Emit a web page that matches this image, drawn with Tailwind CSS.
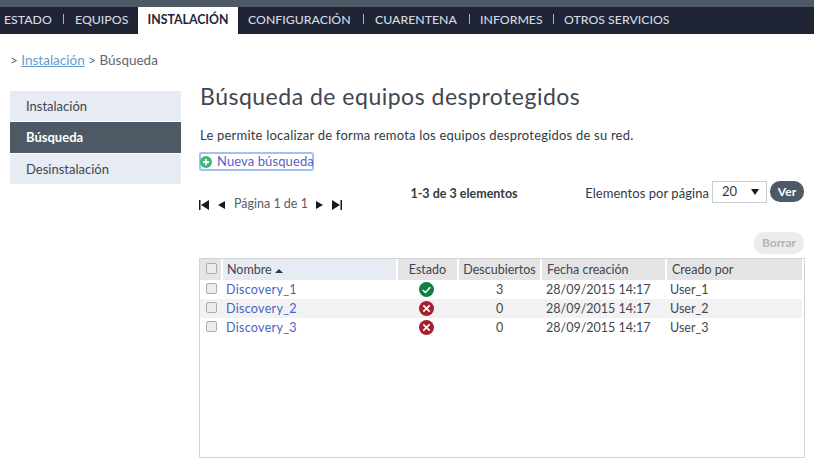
<!DOCTYPE html>
<html lang="es">
<head>
    <meta charset="UTF-8">
    <title>Búsqueda de equipos desprotegidos</title>
    <script src="https://cdn.jsdelivr.net/npm/@tailwindcss/browser@4"></script>
</head>
<body class="bg-white font-['Lato',sans-serif] text-[13px] text-[#3f4650] overflow-hidden">
    <!-- Navbar -->
    <div class="h-[7px] bg-[#4d5a66]"></div>
    <nav class="h-[27px] bg-[#1f2535] flex items-center text-[12.3px] font-medium text-[#d5dae2] whitespace-nowrap">
        <a class="w-[63px] pl-1">ESTADO</a>
        <span class="w-px h-[10px] bg-[#aeb4bd] mb-1"></span>
        <a class="w-[74px] pl-[11px]">EQUIPOS</a>
        <a class="w-[100px] h-full flex items-center justify-center bg-white text-[#1f2535] font-bold">INSTALACIÓN</a>
        <a class="w-[125px] pl-[10px]">CONFIGURACIÓN</a>
        <span class="w-px h-[10px] bg-[#aeb4bd] mb-1"></span>
        <a class="w-[105px] pl-[11px]">CUARENTENA</a>
        <span class="w-px h-[10px] bg-[#aeb4bd] mb-1"></span>
        <a class="w-[83px] pl-[10px]">INFORMES</a>
        <span class="w-px h-[10px] bg-[#aeb4bd] mb-1"></span>
        <a class="pl-[10px]">OTROS SERVICIOS</a>
    </nav>

    <!-- Breadcrumb -->
    <div class="pl-[10px] pt-[16px] h-[57px] text-[13.5px] text-[#5f6670]">&gt; <a class="text-[#5f9ccb] underline">Instalación</a> &gt; Búsqueda</div>

    <div class="flex">
        <!-- Sidebar -->
        <aside class="w-[171px] ml-[10px] mr-[18px] flex flex-col gap-px text-[13px]">
            <div class="h-[30px] pt-px bg-[#e7ebf3] pl-4 flex items-center">Instalación</div>
            <div class="h-[31px] bg-[#4d5a66] pl-4 flex items-center text-white font-bold">Búsqueda</div>
            <div class="h-[30px] pt-px bg-[#e7ebf3] pl-4 flex items-center">Desinstalación</div>
        </aside>

        <!-- Main -->
        <main class="w-[606px]">
            <h1 class="pl-px text-[23px] leading-[30px] -mt-[10px] tracking-[0.5px] text-[#3f4650]">Búsqueda de equipos desprotegidos</h1>
            <p class="pl-px mt-[16px] leading-4 text-[13px] tracking-[0.21px] text-[#333a42]">Le permite localizar de forma remota los equipos desprotegidos de su red.</p>

            <button class="mt-[9px] w-[115px] h-[19px] border-2 border-[#a3c0f5] rounded-[3px] flex items-center justify-start gap-[5px] text-[13px] tracking-[0.1px] text-[#5a5fc4] whitespace-nowrap">
                <svg width="12" height="12" viewBox="0 0 12 12" class="shrink-0 -ml-px"><circle cx="6" cy="6" r="6" fill="#3fb87a"/><path d="M6 3v6M3 6h6" stroke="#fff" stroke-width="1.8"/></svg>
                Nueva búsqueda
            </button>

            <!-- Pager row -->
            <div class="flex h-[47px] mt-[11px]">
                <div class="w-[212px] flex items-center h-[45px] text-[#555c66]">
                    <svg width="10" height="10" viewBox="0 0 10 10"><path d="M0 0h1.5v10H0zM10 0v10L2 5z" fill="#16191f"/></svg>
                    <svg width="8" height="10" viewBox="0 0 8 10" class="ml-[8px]"><path d="M8 1v8L1 5z" fill="#16191f"/></svg>
                    <span class="ml-[9px] text-[12.5px]">Página 1 de 1</span>
                    <svg width="8" height="10" viewBox="0 0 8 10" class="ml-[8px]"><path d="M0 1v8l7-4z" fill="#16191f"/></svg>
                    <svg width="10" height="10" viewBox="0 0 10 10" class="ml-[8px]"><path d="M0 0l8 5-8 5zM8.500 0H10v10H8.500z" fill="#16191f"/></svg>
                </div>
                <div class="w-[177px] pl-px font-bold text-[12.5px] text-[#333a42] pt-[3px]">1-3 de 3 elementos</div>
                <div class="flex-1 flex items-start justify-end pr-px -mt-[1px] text-[#333a42] whitespace-nowrap">
                    <span class="mt-[3px] tracking-[0.05px]">Elementos por página</span>
                    <div class="ml-[3px] w-[55px] h-[22px] border border-[#c9ced5] flex items-center justify-between pl-[9px] pr-[7px]">20<svg width="8" height="6" viewBox="0 0 8 6"><path d="M0 0h8L4 6z" fill="#16191f"/></svg></div>
                    <button class="ml-[3px] w-[34px] h-[21px] bg-[#4d5a66] rounded-[10px] text-white font-bold text-[12px]">Ver</button>
                </div>
            </div>

            <div class="flex justify-end pr-px mt-[3px]">
                <button class="w-[50px] h-[22px] rounded-[10px] bg-[#ececec] text-[#b4b4b4] font-bold text-[12px]">Borrar</button>
            </div>

            <!-- Table -->
            <div class="mt-[4px] h-[200px] border border-[#d2d2d2]">
                <table class="w-[602px] border-collapse table-fixed text-[12.5px] leading-[18px]">
                    <colgroup>
                        <col class="w-[22px]"><col class="w-[175px]"><col class="w-[61px]"><col class="w-[83px]"><col class="w-[125px]"><col class="w-[136px]">
                    </colgroup>
                    <thead>
                        <tr class="h-[21px] text-[#3f4650] font-normal">
                            <th class="bg-[#e4e4e4] border-r-2 border-white font-normal"><span class="block w-[11px] h-[11px] ml-[6px] -mt-[2px] border border-[#ababab] rounded-[2px] bg-[#ececec]"></span></th>
                            <th class="bg-[#e7ebf3] border-r-2 border-white font-normal text-left pl-[4px] pt-px">Nombre <svg width="8" height="4" viewBox="0 0 8 4" class="inline align-middle"><path d="M0 4h8L4 0z" fill="#1f3a5f"/></svg></th>
                            <th class="bg-[#e4e4e4] border-r-2 border-white font-normal pt-px">Estado</th>
                            <th class="bg-[#e4e4e4] border-r-2 border-white font-normal pt-px">Descubiertos</th>
                            <th class="bg-[#e4e4e4] border-r-2 border-white font-normal text-left pl-[5px] pt-px">Fecha creación</th>
                            <th class="bg-[#e4e4e4] font-normal text-left pl-[5px] pt-px">Creado por</th>
                        </tr>
                    </thead>
                    <tbody>
                        <tr class="h-[19px]">
                            <td><span class="block w-[11px] h-[11px] ml-[6px] -mt-[2px] border border-[#ababab] rounded-[2px] bg-[#ececec]"></span></td>
                            <td class="pl-[4px] pt-px text-[#4a63c4] tracking-[0.3px]">Discovery_1</td>
                            <td><svg width="15" height="15" viewBox="0 0 14 14" class="mx-auto -mt-[1px] -translate-x-px"><circle cx="7" cy="7" r="7" fill="#0f8043"/><path d="M3.500 7.500l2.500 2.300 4.500-5" fill="none" stroke="#fff" stroke-width="1.400"/></svg></td>
                            <td class="text-center pt-px">3</td>
                            <td class="pl-[5px] pt-px">28/09/2015 14:17</td>
                            <td class="pl-[4px] pt-px">User_1</td>
                        </tr>
                        <tr class="h-[19px] bg-[#f2f2f2]">
                            <td><span class="block w-[11px] h-[11px] ml-[6px] -mt-[2px] border border-[#ababab] rounded-[2px] bg-[#ececec]"></span></td>
                            <td class="pl-[4px] pt-px text-[#4a63c4] tracking-[0.3px]">Discovery_2</td>
                            <td><svg width="15" height="15" viewBox="0 0 14 14" class="mx-auto -mt-[1px] -translate-x-px"><circle cx="7" cy="7" r="7" fill="#a61f2b"/><path d="M4 4l6 6M10 4l-6 6" stroke="#fff" stroke-width="1.600"/></svg></td>
                            <td class="text-center pt-px">0</td>
                            <td class="pl-[5px] pt-px">28/09/2015 14:17</td>
                            <td class="pl-[4px] pt-px">User_2</td>
                        </tr>
                        <tr class="h-[19px]">
                            <td><span class="block w-[11px] h-[11px] ml-[6px] -mt-[2px] border border-[#ababab] rounded-[2px] bg-[#ececec]"></span></td>
                            <td class="pl-[4px] pt-px text-[#4a63c4] tracking-[0.3px]">Discovery_3</td>
                            <td><svg width="15" height="15" viewBox="0 0 14 14" class="mx-auto -mt-[1px] -translate-x-px"><circle cx="7" cy="7" r="7" fill="#a61f2b"/><path d="M4 4l6 6M10 4l-6 6" stroke="#fff" stroke-width="1.600"/></svg></td>
                            <td class="text-center pt-px">0</td>
                            <td class="pl-[5px] pt-px">28/09/2015 14:17</td>
                            <td class="pl-[4px] pt-px">User_3</td>
                        </tr>
                    </tbody>
                </table>
            </div>
        </main>
    </div>
</body>
</html>
